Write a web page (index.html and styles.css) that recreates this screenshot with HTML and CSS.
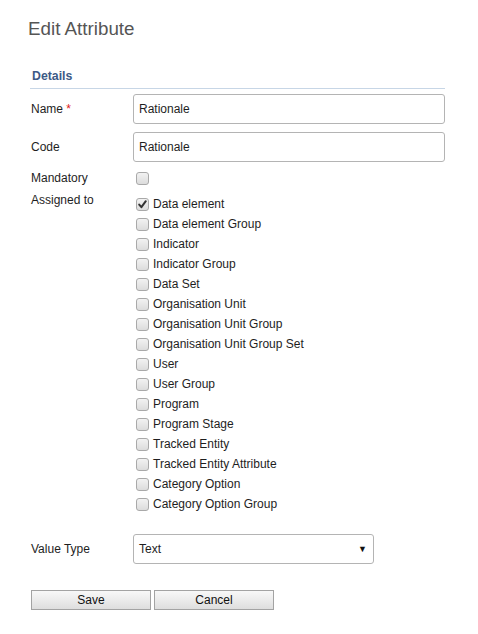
FILE: index.html
```html
<!DOCTYPE html>
<html>
<head>
<meta charset="utf-8">
<link rel="stylesheet" href="styles.css">
</head>
<body>
<div class="page">
  <h1 class="title">Edit Attribute</h1>
  <form class="form">
    <div class="section-head">Details</div>
    <div class="row row-input">
      <label class="lbl">Name <span class="req">*</span></label>
      <div class="field"><input class="text" type="text" value="Rationale"></div>
    </div>
    <div class="row row-input">
      <label class="lbl">Code</label>
      <div class="field"><input class="text" type="text" value="Rationale"></div>
    </div>
    <div class="row row-check">
      <label class="lbl">Mandatory</label>
      <div class="field"><span class="cb"></span></div>
    </div>
    <div class="row row-list">
      <label class="lbl lbl-top">Assigned to</label>
      <ul class="list">
        <li class="item"><span class="cb checked"><svg viewBox="0 0 13 13" width="13" height="13"><path d="M3.2 6.6 L5.4 9.2 L9.8 3.2" fill="none" stroke="#333" stroke-width="2" stroke-linecap="round" stroke-linejoin="round"/></svg></span><span>Data element</span></li>
        <li class="item"><span class="cb"></span><span>Data element Group</span></li>
        <li class="item"><span class="cb"></span><span>Indicator</span></li>
        <li class="item"><span class="cb"></span><span>Indicator Group</span></li>
        <li class="item"><span class="cb"></span><span>Data Set</span></li>
        <li class="item"><span class="cb"></span><span>Organisation Unit</span></li>
        <li class="item"><span class="cb"></span><span>Organisation Unit Group</span></li>
        <li class="item"><span class="cb"></span><span>Organisation Unit Group Set</span></li>
        <li class="item"><span class="cb"></span><span>User</span></li>
        <li class="item"><span class="cb"></span><span>User Group</span></li>
        <li class="item"><span class="cb"></span><span>Program</span></li>
        <li class="item"><span class="cb"></span><span>Program Stage</span></li>
        <li class="item"><span class="cb"></span><span>Tracked Entity</span></li>
        <li class="item"><span class="cb"></span><span>Tracked Entity Attribute</span></li>
        <li class="item"><span class="cb"></span><span>Category Option</span></li>
        <li class="item"><span class="cb"></span><span>Category Option Group</span></li>
      </ul>
    </div>
    <div class="row row-select">
      <label class="lbl">Value Type</label>
      <div class="field"><div class="select"><span>Text</span><span class="arrow">&#9660;</span></div></div>
    </div>
    <div class="buttons">
      <button type="button" class="btn">Save</button>
      <button type="button" class="btn">Cancel</button>
    </div>
  </form>
</div>
</body>
</html>
```

FILE: styles.css
```css
html, body {
  margin: 0;
  padding: 0;
  background: #ffffff;
}
body {
  font-family: "Liberation Sans", Arial, sans-serif;
  font-size: 12px;
  color: #1e1e1e;
}
.page {
  padding: 18px 0 0 28px;
}
.title {
  margin: 0;
  font-size: 18.8px;
  line-height: 22px;
  font-weight: normal;
  color: #555555;
}
.form {
  margin: 28px 0 0 2px;
  width: 415px;
}
.section-head {
  font-weight: bold;
  font-size: 12.3px;
  line-height: 16px;
  color: #3d5a86;
  padding: 0 0 4px 2px;
  border-bottom: 1px solid #c7d6e6;
}
.row {
  display: flex;
  align-items: center;
}
.lbl {
  width: 102px;
  flex: none;
  padding-left: 1px;
  line-height: 16px;
}
.req {
  color: #e02020;
}
.field {
  flex: 1;
  display: flex;
  align-items: center;
}
.row-input {
  height: 30px;
  margin-top: 8px;
}
.section-head + .row-input {
  margin-top: 5px;
}
.text {
  box-sizing: border-box;
  width: 100%;
  height: 30px;
  margin: 0;
  border: 1px solid #b4b4b4;
  border-radius: 3px;
  padding: 0 5px;
  font-family: "Liberation Sans", Arial, sans-serif;
  font-size: 12px;
  color: #1e1e1e;
  background: #ffffff;
  outline: none;
}
.row-check {
  height: 16px;
  margin-top: 8px;
}
.row-check .field {
  padding-left: 3px;
}
.cb {
  display: inline-block;
  box-sizing: border-box;
  width: 13px;
  height: 13px;
  flex: none;
  border: 1px solid #a9a9a9;
  border-radius: 3px;
  background: linear-gradient(#f2f2f2, #dcdcdc);
  position: relative;
}
.cb svg {
  position: absolute;
  left: -1px;
  top: -1px;
}
.row-list {
  align-items: flex-start;
  margin-top: 6px;
}
.list {
  list-style: none;
  margin: 0;
  padding: 2px 0 0 3px;
}
.item {
  height: 20px;
  display: flex;
  align-items: center;
  gap: 4px;
}
.row-select {
  height: 30px;
  margin-top: 20px;
}
.select {
  box-sizing: border-box;
  width: 241px;
  height: 30px;
  border: 1px solid #b4b4b4;
  border-radius: 3px;
  display: flex;
  align-items: center;
  justify-content: space-between;
  padding: 0 6px 0 5px;
  background: #ffffff;
}
.arrow {
  font-size: 9px;
  color: #111111;
}
.buttons {
  display: flex;
  gap: 3px;
  margin: 26px 0 0 1px;
}
.btn {
  width: 120px;
  height: 20px;
  margin: 0;
  padding: 0;
  border: 1px solid #a3a3a3;
  border-radius: 0;
  background: linear-gradient(#f8f8f8, #dedede);
  font-family: "Liberation Sans", Arial, sans-serif;
  font-size: 12px;
  color: #111111;
}
```
